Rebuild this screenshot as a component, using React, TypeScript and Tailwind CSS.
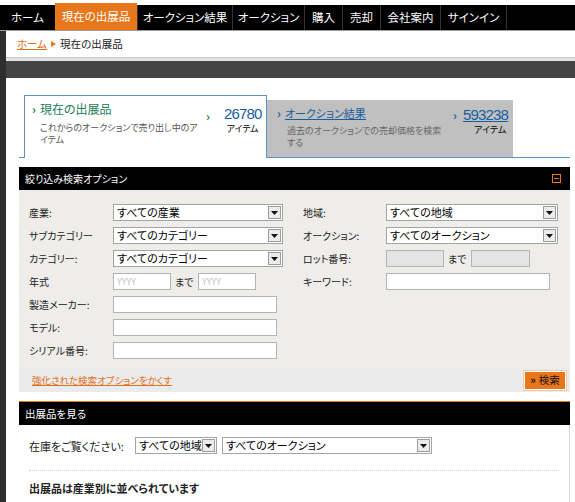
import type { ReactNode } from "react";

const navItems = [
  { label: "ホーム", w: "w-[55px]" },
  { label: "現在の出展品", w: "w-[82px]", active: true },
  { label: "オークション結果", w: "w-[95px]" },
  { label: "オークション", w: "w-[72px]" },
  { label: "購入", w: "w-[38px]" },
  { label: "売却", w: "w-[38px]" },
  { label: "会社案内", w: "w-[60px]" },
  { label: "サインイン", w: "w-[66px]" },
];

const DownArrow = () => (
  <svg width="7" height="4" viewBox="0 0 7 4">
    <path d="M0 0h7L3.5 4z" fill="#111" />
  </svg>
);

const Select = ({ value, w }: { value: string; w: string }) => (
  <div className={`flex h-[17px] ${w} items-center border border-[#a4a4a4] bg-white`}>
    <span className="flex-1 overflow-hidden whitespace-nowrap pl-[3px] text-[11px] leading-[15px] text-black">
      {value}
    </span>
    <span className="mr-px flex h-[13px] w-[13px] shrink-0 items-center justify-center border border-[#9c9c9c] bg-[#ececec]">
      <DownArrow />
    </span>
  </div>
);

const Input = ({ w, placeholder, disabled }: { w: string; placeholder?: string; disabled?: boolean }) => (
  <div
    className={`flex h-[17px] ${w} items-center border border-[#b4b4b4] pl-[3px] text-[9px] leading-[15px] text-[#c4c4c4] ${
      disabled ? "bg-[#e4e4e4]" : "bg-white"
    }`}
  >
    {placeholder}
  </div>
);

const Row = ({ label, lw, children }: { label: string; lw: string; children: ReactNode }) => (
  <div className="flex h-[17px] items-center">
    <span className={`${lw} shrink-0 whitespace-nowrap text-[10px] leading-[15px] text-[#222]`}>{label}</span>
    {children}
  </div>
);

const Range = ({ placeholder, disabled, w2 }: { placeholder?: string; disabled?: boolean; w2: string }) => (
  <div className="flex items-center">
    <Input w="w-[58px]" placeholder={placeholder} disabled={disabled} />
    <span className="w-[27px] pl-[4px] text-[10px] leading-[15px] text-[#222]">まで</span>
    <Input w={w2} placeholder={placeholder} disabled={disabled} />
  </div>
);

export default function App() {
  return (
    <div className="h-[502px] w-[575px] overflow-hidden bg-white font-['Noto_Sans_CJK_JP','Liberation_Sans',sans-serif] [font-feature-settings:'palt']">
      {/* global nav */}
      <nav className="flex h-[31px] items-end border-b border-[#9a9a9a]">
        {navItems.map((item) =>
          item.active ? (
            <div
              key={item.label}
              className={`flex h-[27px] ${item.w} items-center justify-center bg-[#e8761b] text-[11.5px] text-white`}
            >
              {item.label}
            </div>
          ) : (
            <div
              key={item.label}
              className={`flex h-[25px] ${item.w} items-center justify-center border-l border-[#333] bg-black text-[11.5px] text-white first:border-l-0`}
            >
              {item.label}
            </div>
          ),
        )}
        <div className="h-[25px] flex-1 border-l border-[#333] bg-black" />
      </nav>

      <div className="flex">
        <div className="h-[471px] w-[6px] bg-[#2e2e2e]" />
        <main className="flex-1">
          {/* breadcrumb */}
          <div className="flex h-[26px] items-center pl-[11px] text-[10.5px]">
            <a className="text-[#e0701c] underline">ホーム</a>
            <svg width="5" height="6" viewBox="0 0 5 6" className="mx-[4px]">
              <path d="M0 0l5 3-5 3z" fill="#e8761b" />
            </svg>
            <span className="text-[#222]">現在の出展品</span>
          </div>
          <div className="h-[4px] border-t border-[#c8c8c8] bg-[#e2e2e2]" />
          <div className="h-[17px] bg-[#444]" />

          <div className="ml-[13px] mr-[5px]">
            {/* tabs */}
            <div className="mt-[17px] flex items-end border-b border-[#5c93c6] pl-[5px]">
              <div className="-mb-px flex h-[63px] w-[243px] border border-b-0 border-[#5c93c6] bg-white pt-[5px]">
                <div className="w-[181px] shrink-0 pl-[7px]">
                  <div className="flex items-center text-[12px] leading-[16px] text-[#217d55]">
                    <span className="mr-[4px] font-bold">›</span>
                    現在の出展品
                  </div>
                  <p className="mt-[5px] whitespace-nowrap pl-[8px] text-[9px] leading-[12px] text-[#555]">
                    これからのオークションで売り出し中のア
                    <br />
                    イテム
                  </p>
                </div>
                <div className="flex pt-[5px]">
                  <span className="mr-[14px] pt-[2px] text-[12px] font-bold leading-[16px] text-[#217d55]">›</span>
                  <div className="flex flex-col items-end">
                    <span className="font-['Liberation_Sans',sans-serif] text-[15px] leading-[16px] tracking-[-0.8px] text-[#1a5d9e]">
                      26780
                    </span>
                    <span className="mt-[2px] pr-[3px] text-[9px] leading-none text-black">アイテム</span>
                  </div>
                </div>
              </div>
              <div className="flex h-[57px] w-[246px] bg-[#c0c0c0] pt-[5px]">
                <div className="w-[186px] shrink-0 pl-[10px]">
                  <div className="flex items-center text-[11px] leading-[16px]">
                    <span className="mr-[4px] text-[12px] font-bold text-[#1a5d9e]">›</span>
                    <a className="text-[#1a5d9e] underline">オークション結果</a>
                  </div>
                  <p className="mt-[4px] whitespace-nowrap pl-[10px] text-[9px] leading-[12px] text-[#666]">
                    過去のオークションでの売却価格を検索
                    <br />
                    する
                  </p>
                </div>
                <div className="flex pt-[2px]">
                  <span className="mr-[6px] text-[12px] font-bold leading-[16px] text-[#1a5d9e]">›</span>
                  <div className="flex flex-col items-end">
                    <a className="font-['Liberation_Sans',sans-serif] text-[15px] leading-[16px] tracking-[-0.8px] text-[#1a5d9e] underline">
                      593238
                    </a>
                    <span className="mt-[2px] pr-[2px] text-[9px] leading-none text-black">アイテム</span>
                  </div>
                </div>
              </div>
            </div>

            {/* filter panel */}
            <section className="mt-[9px]">
              <div className="flex h-[23px] items-center justify-between bg-black pl-[6px] pr-[9px]">
                <span className="text-[10px] text-white">絞り込み検索オプション</span>
                <span className="flex h-[9px] w-[9px] items-center justify-center border border-[#e8761b]">
                  <span className="h-px w-[5px] bg-[#e8761b]" />
                </span>
              </div>
              <div className="bg-[#eeede9]">
                <div className="flex pl-[10px] pt-[14px]">
                  <div className="flex w-[274px] flex-col gap-[6px]">
                    <Row label="産業:" lw="w-[84px]">
                      <Select value="すべての産業" w="w-[170px]" />
                    </Row>
                    <Row label="サブカテゴリー" lw="w-[84px]">
                      <Select value="すべてのカテゴリー" w="w-[170px]" />
                    </Row>
                    <Row label="カテゴリー:" lw="w-[84px]">
                      <Select value="すべてのカテゴリー" w="w-[170px]" />
                    </Row>
                    <Row label="年式" lw="w-[84px]">
                      <Range placeholder="YYYY" w2="w-[58px]" />
                    </Row>
                    <Row label="製造メーカー:" lw="w-[84px]">
                      <Input w="w-[164px]" />
                    </Row>
                    <Row label="モデル:" lw="w-[84px]">
                      <Input w="w-[164px]" />
                    </Row>
                    <Row label="シリアル番号:" lw="w-[84px]">
                      <Input w="w-[164px]" />
                    </Row>
                  </div>
                  <div className="flex flex-col gap-[6px]">
                    <Row label="地域:" lw="w-[83px]">
                      <Select value="すべての地域" w="w-[172px]" />
                    </Row>
                    <Row label="オークション:" lw="w-[83px]">
                      <Select value="すべてのオークション" w="w-[172px]" />
                    </Row>
                    <Row label="ロット番号:" lw="w-[83px]">
                      <Range disabled w2="w-[59px]" />
                    </Row>
                    <Row label="キーワード:" lw="w-[83px]">
                      <Input w="w-[164px]" />
                    </Row>
                  </div>
                </div>
                <div className="mt-[9px] flex h-[24px] items-center justify-between bg-[#ebebeb] pl-[13px] pr-[4px]">
                  <a className="text-[9.5px] text-[#e0701c] underline">強化された検索オプションをかくす</a>
                  <button className="flex h-[19px] w-[42px] items-center justify-center gap-[3px] border border-white bg-[#e8761b] text-[10.5px] leading-none text-[#111] shadow-[0_0_0_1px_#f4c9a4]">
                    <span className="font-bold">»</span>
                    検索
                  </button>
                </div>
              </div>
            </section>

            {/* browse panel */}
            <section className="mt-[9px] border-t border-[#e8761b]">
              <div className="flex h-[23px] items-center bg-black pl-[6px]">
                <span className="text-[10.5px] text-white">出展品を見る</span>
              </div>
              <div className="h-[100px] border-r border-[#dcdcdc] px-[10px] pt-[12px]">
                <div className="flex items-center">
                  <span className="w-[106px] text-[11px] leading-[16px] text-[#222]">在庫をご覧ください:</span>
                  <Select value="すべての地域" w="w-[82px]" />
                  <span className="w-[5px]" />
                  <Select value="すべてのオークション" w="w-[210px]" />
                </div>
                <div className="mt-[16px] border-t border-dotted border-[#cfcfcf]" />
                <p className="mt-[9px] text-[11px] font-bold leading-[16px] text-[#222]">出展品は産業別に並べられています</p>
              </div>
            </section>
          </div>
        </main>
      </div>
    </div>
  );
}
